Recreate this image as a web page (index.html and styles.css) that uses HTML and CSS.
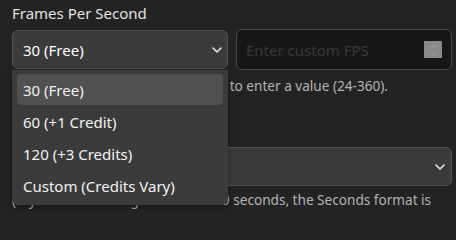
FILE: index.html
```html
<!DOCTYPE html>
<html lang="en">
<head>
<meta charset="utf-8">
<link rel="stylesheet" href="styles.css">
</head>
<body>
<div class="panel">
  <div class="field">
    <div class="label">Frames Per Second</div>
    <div class="row">
      <div class="select open">
        <span class="value">30 (Free)</span>
        <svg class="chev" width="10" height="6" viewBox="0 0 10 6"><path d="M1 1l4 4 4-4" fill="none" stroke="#e8e8e8" stroke-width="1.6" stroke-linecap="round" stroke-linejoin="round"/></svg>
      </div>
      <div class="input">
        <span class="placeholder">Enter custom FPS</span>
        <span class="spin"><svg width="10" height="14" viewBox="0 0 10 14"><path d="M2 5l3-3 3 3M2 9l3 3 3-3" fill="none" stroke="#9c9c9c" stroke-width="1"/></svg></span>
      </div>
    </div>
    <div class="help">Choose: "Custom (Credits Varies)" to enter a value (24-360).</div>
  </div>
  <div class="field second">
    <div class="label">Duration Format</div>
    <div class="select wide">
      <span class="value">Seconds</span>
      <svg class="chev" width="10" height="6" viewBox="0 0 10 6"><path d="M1 1l4 4 4-4" fill="none" stroke="#e8e8e8" stroke-width="1.6" stroke-linecap="round" stroke-linejoin="round"/></svg>
    </div>
    <div class="help">(If your timeline is greater than 59 seconds, the Seconds format is</div>
  </div>
  <ul class="menu">
    <li class="item active">30 (Free)</li>
    <li class="item">60 (+1 Credit)</li>
    <li class="item">120 (+3 Credits)</li>
    <li class="item">Custom (Credits Vary)</li>
  </ul>
</div>
</body>
</html>
```
FILE: styles.css
```css
html, body {
  margin: 0;
  padding: 0;
  background: #232323;
}
body {
  font-family: "Noto Sans", "Open Sans", sans-serif;
  color: #e8e8e8;
  width: 456px;
  height: 210px;
  overflow: hidden;
}
.panel {
  position: relative;
  padding: 3px 4px 0 12px;
}
.label {
  font-size: 15px;
  line-height: 20px;
  color: #e2e2e2;
  margin-bottom: 6px;
}
.row {
  display: grid;
  grid-template-columns: 216px 216px;
  gap: 8px;
  align-items: center;
}
.select {
  box-sizing: border-box;
  height: 39px;
  background: #3a3a3a;
  border: 1px solid #4c535d;
  border-radius: 6px;
  display: flex;
  align-items: center;
  justify-content: space-between;
  padding: 0 5px 0 10px;
  font-size: 15px;
}
.select.open .value { color: #ffffff; }
.input {
  box-sizing: border-box;
  height: 41px;
  background: #171717;
  border: 1px solid #434c58;
  border-radius: 6px;
  display: flex;
  align-items: center;
  justify-content: space-between;
  padding: 0 9px 0 9px;
  font-size: 15px;
}
.placeholder { color: #383838; }
.spin {
  width: 18px;
  height: 17px;
  background: #8a8a8a;
  display: flex;
  align-items: center;
  justify-content: center;
}
.help {
  font-size: 13.6px;
  line-height: 18px;
  color: #b4b4b4;
  margin-top: 7px;
  white-space: nowrap;
}
.second { margin-top: 28px; }
.second .label { margin-bottom: 4px; }
.select.wide { width: 440px; height: 39px; padding-right: 6px; }
.second .help { margin-top: 5px; }
.menu {
  position: absolute;
  top: 70px;
  left: 12px;
  width: 216px;
  box-sizing: border-box;
  margin: 0;
  padding: 4px 5px;
  list-style: none;
  background: #3b3b3b;
  border-radius: 0 0 7px 7px;
  display: flex;
  flex-direction: column;
  gap: 1px;
  box-shadow: 0 2px 6px rgba(0,0,0,0.35);
}
.item {
  height: 31px;
  display: flex;
  align-items: center;
  padding: 0 6px;
  font-size: 15px;
  color: #f2f2f2;
  border-radius: 3px;
}
.item.active { background: #505050; }
```
